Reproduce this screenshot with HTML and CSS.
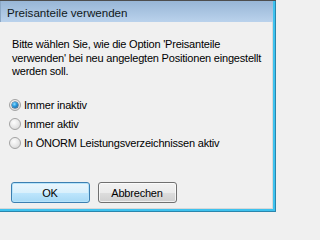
FILE: index.html
```html
<!DOCTYPE html>
<html lang="de">
<head>
<meta charset="utf-8">
<title>Preisanteile verwenden</title>
<link rel="stylesheet" href="styles.css">
</head>
<body>
<div class="window">
  <div class="titlebar"><span class="title">Preisanteile verwenden</span></div>
  <div class="content">
    <p class="message">Bitte wählen Sie, wie die Option 'Preisanteile verwenden' bei neu angelegten Positionen eingestellt werden soll.</p>
    <div class="options">
      <label class="option"><span class="radio checked"><span class="dot"></span></span><span class="label">Immer inaktiv</span></label>
      <label class="option"><span class="radio"></span><span class="label">Immer aktiv</span></label>
      <label class="option"><span class="radio"></span><span class="label">In ÖNORM Leistungsverzeichnissen aktiv</span></label>
    </div>
    <div class="buttons">
      <button class="btn btn-default" type="button">OK</button>
      <button class="btn" type="button">Abbrechen</button>
    </div>
  </div>
</div>
</body>
</html>
```

FILE: styles.css
```css
html, body {
  margin: 0;
  padding: 0;
  background: #f0f0f0;
}

.window {
  width: 276px;
  height: 212px;
  box-sizing: border-box;
  border-top: 1px solid #4e4e4e;
  background: #f0f0f0;
  display: flex;
  flex-direction: column;
  box-shadow: inset -1px -1px 0 #2a86ad, inset -3px -3px 0 #3ec2ee, inset -4px -4px 0 #d8d8d8;
  font-family: "Liberation Sans", Arial, sans-serif;
  color: #000;
}

.titlebar {
  height: 21px;
  margin-right: 3px;
  border-left: 1px solid #8ba8c6;
  background: linear-gradient(#98b6d6, #bad2ec);
  display: flex;
  align-items: center;
  padding-left: 6px;
  padding-top: 2px;
  box-sizing: border-box;
}

.title {
  font-size: 11.6px;
  color: #101820;
  line-height: 14px;
}

.content {
  display: flex;
  flex-direction: column;
  padding: 0 0 0 12px;
}

.message {
  margin: 16px 0 0 0;
  width: 256px;
  font-size: 11px;
  letter-spacing: -0.2px;
  line-height: 13.5px;
}

.options {
  margin-top: 16.5px;
  display: flex;
  flex-direction: column;
}

.option {
  height: 19px;
  display: flex;
  align-items: center;
  margin-left: -3.5px;
  font-size: 11px;
  letter-spacing: -0.2px;
}

.radio {
  width: 12px;
  height: 12px;
  box-sizing: border-box;
  border-radius: 50%;
  border: 1px solid #a3a3a3;
  background: radial-gradient(circle at 40% 35%, #fdfdfd 0%, #e6e6e6 55%, #cfcfcf 100%);
  display: flex;
  align-items: center;
  justify-content: center;
  margin-right: 3.5px;
  flex: none;
}

.dot {
  width: 6px;
  height: 6px;
  border-radius: 50%;
  background: radial-gradient(circle at 40% 35%, #8fe0ff 0%, #2a9be0 40%, #0b4c86 100%);
  box-shadow: 0 0 0 0.5px #12406b;
}

.buttons {
  margin-top: 30px;
  margin-left: -1.5px;
  display: flex;
  gap: 8px;
}

.btn {
  width: 79px;
  height: 21px;
  box-sizing: border-box;
  border: 1px solid #707070;
  border-radius: 3px;
  padding: 0;
  font-family: "Liberation Sans", Arial, sans-serif;
  font-size: 11px;
  letter-spacing: -0.2px;
  color: #000;
  background: linear-gradient(#f2f2f2 0%, #ebebeb 50%, #dddddd 51%, #cfcfcf 100%);
  box-shadow: inset 0 0 0 1px rgba(255, 255, 255, 0.7);
}

.btn-default {
  border-color: #3c7fb1;
  background: linear-gradient(#eaf6fd 0%, #d9f0fc 50%, #bee6fd 51%, #a7d9f5 100%);
  box-shadow: inset 0 0 0 1px #b6e4fb;
}
```
